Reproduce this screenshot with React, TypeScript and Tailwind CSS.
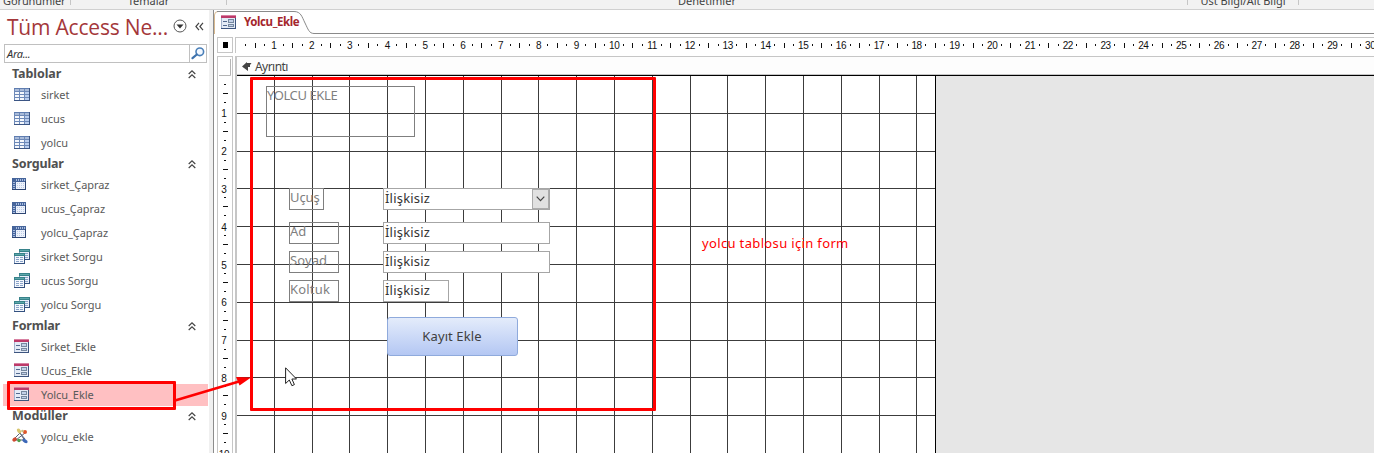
import React from "react";

const ui = "font-['Noto_Sans','Open_Sans',sans-serif]";
const UNIT = 37.795;

function TableIcon() {
  return (
    <svg width="16" height="13" shapeRendering="crispEdges">
      <rect width="16" height="13" fill="#6d89b8" />
      <rect x="1" y="1" width="14" height="2" fill="#a9bbd9" />
      {[4, 7, 10].map((y) =>
        [1, 6, 11].map((x) => (
          <rect key={`${x}-${y}`} x={x} y={y} width="4" height="2" fill={x === 11 ? "#b9cdee" : "#f4f7fc"} />
        ))
      )}
      <rect x="0" y="0" width="16" height="1" fill="#5f7db0" />
      <rect x="5" y="1" width="1" height="2" fill="#6d89b8" />
      <rect x="10" y="1" width="1" height="2" fill="#6d89b8" />
      <path d="M0 12h16v1H0zM15 0h1v13h-1z" fill="#3b5584" />
    </svg>
  );
}

function CrosstabIcon() {
  return (
    <svg width="14" height="12" shapeRendering="crispEdges">
      <rect width="14" height="12" fill="#46659b" />
      {[4, 6, 8, 10, 12].map((x) => (
        <rect key={x} x={x} y="1" width="1" height="2" fill="#a9bcdf" />
      ))}
      {[4, 6, 8, 10].map((y) => (
        <rect key={y} x="1" y={y} width="2" height="1" fill="#a9bcdf" />
      ))}
      <rect x="4" y="4" width="9" height="7" fill="#edf2fb" />
      {[5, 7, 9].map((y) =>
        [5, 7, 9, 11].map((x) => <rect key={`${x}-${y}`} x={x} y={y} width="1" height="1" fill="#bccbe6" />)
      )}
      <path d="M0 11h14v1H0zM13 3h1v9h-1z" fill="#2e4673" />
    </svg>
  );
}

function QueryIcon() {
  return (
    <svg width="16" height="15" shapeRendering="crispEdges">
      <rect x="5" y="0" width="11" height="11" fill="#7f97bb" />
      <rect x="5" y="0" width="11" height="3" fill="#37828a" />
      <rect x="6" y="1" width="9" height="1" fill="#5ea7ab" />
      <rect x="6" y="3" width="9" height="7" fill="#e8effa" />
      <path d="M11 4h3v1h-3zM11 6h3v1h-3zM11 8h3v1h-3z" fill="#8ba3c9" />
      <path d="M11 10h5v1h-5zM15 3h1v8h-1z" fill="#33507f" />
      <rect x="0" y="4" width="11" height="11" fill="#7f97bb" />
      <rect x="0" y="4" width="11" height="3" fill="#37828a" />
      <rect x="1" y="5" width="9" height="1" fill="#5ea7ab" />
      <rect x="1" y="7" width="9" height="7" fill="#f4f8fd" />
      <path d="M2 8h3v1H2zM6 8h3v1H6zM2 10h3v1H2zM6 10h3v1H6zM2 12h3v1H2zM6 12h3v1H6z" fill="#8ba3c9" />
      <path d="M0 14h11v1H0zM10 7h1v8h-1z" fill="#33507f" />
    </svg>
  );
}

function FormIcon() {
  return (
    <svg width="15" height="14" shapeRendering="crispEdges">
      <rect width="15" height="14" fill="#a3b2cd" />
      <rect width="15" height="3" fill="#bd3a69" />
      <rect width="15" height="1" fill="#d881a2" />
      <rect x="1" y="3" width="13" height="10" fill="#e4ebf6" />
      <path d="M2 6h4v1H2zM2 10h4v1H2z" fill="#52698f" />
      <path d="M7 4h6v4H7zM7 9h6v3H7z" fill="#76889f" />
      <path d="M8 5h4v2H8zM8 10h4v1H8z" fill="#c3d1e8" />
      <path d="M0 13h15v1H0zM14 3h1v11h-1z" fill="#3d557f" />
    </svg>
  );
}

function ModuleIcon() {
  return (
    <svg width="17" height="16">
      <path d="M3 10 8 5l5 8M7 4l6 7M4 12l9-7M3 12h9" fill="none" stroke="#5c6478" strokeWidth="1" />
      <ellipse cx="7" cy="3" rx="1.700" ry="2.6" fill="#d8c670" transform="rotate(-35 7 3)" />
      <circle cx="13" cy="4" r="2" fill="#e0572b" />
      <circle cx="10.500" cy="3" r="1.300" fill="#c9bd84" />
      <ellipse cx="2.6" cy="11.500" rx="2.400" ry="1.800" fill="#cf4a31" transform="rotate(-40 2.6 11.5)" />
      <circle cx="7" cy="12.500" r="1.700" fill="#4fa04a" />
      <ellipse cx="13" cy="13" rx="2.900" ry="1.700" fill="#3c68b8" transform="rotate(30 13 13)" />
    </svg>
  );
}

function Collapse() {
  return (
    <svg width="8" height="9" fill="none" stroke="#444" strokeWidth="1.2">
      <path d="M.7 4 4 .9 7.300 4M.7 8 4 4.900 7.300 8" />
    </svg>
  );
}

const groups = [
  { title: "Tablolar", w: "tracking-[-0.1px]", items: [["sirket", "table"], ["ucus", "table"], ["yolcu", "table"]] },
  {
    title: "Sorgular",
    w: "tracking-[-0.15px]",
    items: [
      ["sirket_Çapraz", "cross"], ["ucus_Çapraz", "cross"], ["yolcu_Çapraz", "cross"],
      ["sirket Sorgu", "query"], ["ucus Sorgu", "query"], ["yolcu Sorgu", "query"],
    ],
  },
  { title: "Formlar", w: "tracking-[-0.2px]", items: [["Sirket_Ekle", "form"], ["Ucus_Ekle", "form"], ["Yolcu_Ekle", "form"]] },
  { title: "Modüller", w: "tracking-[-0.05px]", items: [["yolcu_ekle", "module"]] },
];

function ItemIcon({ kind }: { kind: string }) {
  if (kind === "table") return <TableIcon />;
  if (kind === "cross") return <CrosstabIcon />;
  if (kind === "query") return <QueryIcon />;
  if (kind === "form") return <FormIcon />;
  return <ModuleIcon />;
}

function Ribbon() {
  return (
    <header className="flex h-[10px] shrink-0 overflow-hidden border-b border-[#d0d0d0] bg-[#f2f2f2] text-[11px] leading-[16px] text-[#444]">
      <div className="flex h-[5px] w-[71px] border-r border-[#c6c6c6] pl-[3px]"><span className="-mt-[7px] tracking-[-0.1px]">Görünümler</span></div>
      <div className="flex h-[5px] w-[156px] justify-center border-r border-[#c6c6c6]"><span className="-mt-[7px]">Temalar</span></div>
      <div className="flex h-[5px] w-[961px] justify-center border-r border-[#c6c6c6]"><span className="-mt-[7px]">Denetimler</span></div>
      <div className="flex h-[5px] w-[111px] justify-center whitespace-nowrap border-r border-[#c6c6c6]"><span className="-mt-[7px] tracking-[-0.050px]">Üst Bilgi/Alt Bilgi</span></div>
    </header>
  );
}

function Sidebar() {
  return (
    <nav className="relative flex w-[214px] shrink-0 flex-col border-r border-[#8c8c8c] bg-white">
      <div className="flex grow flex-col border-r-4 border-[#f0f0f0]">
        <div className="flex h-[34px] items-center pl-[7px] text-[#a4373a]">
          <h1 className="w-[166px] whitespace-nowrap font-['Open_Sans','Noto_Sans',sans-serif] text-[21px] leading-[34px] tracking-[-0.200px]">Tüm Access Ne...</h1>
          <svg width="14" height="14" className="-mt-[3px]">
            <circle cx="7" cy="7" r="6" fill="none" stroke="#555" />
            <path d="M3.500 5.500h7L7 9.500z" fill="#333" />
          </svg>
          <svg width="9" height="9" className="-mt-px ml-[8px]" fill="none" stroke="#444" strokeWidth="1.2">
            <path d="M4 .8.900 4.500 4 8.200M8 .8 4.900 4.500 8 8.200" />
          </svg>
        </div>
        <div className="ml-[4px] flex h-[19px] w-[203px] shrink-0 items-center border border-[#c0c0c0] pl-[2px]">
          <span className="grow text-[11px] italic leading-none tracking-[-0.3px] text-[#333]">Ara...</span>
          <div className="flex h-full w-[17px] items-center justify-center border-l border-[#c0c0c0]">
            <svg width="14" height="13" fill="none">
              <circle cx="8.800" cy="4.800" r="3.800" stroke="#4a7fb8" strokeWidth="1.600" fill="#f3f8ff" />
              <path d="m5.800 7.500-4.300 3.700" stroke="#3f73ad" strokeWidth="2.200" strokeLinecap="round" />
            </svg>
          </div>
        </div>
        <div className="mt-[2px] flex flex-col">
          {groups.map((g) => (
            <section key={g.title}>
              <h2 className={`flex h-[18px] items-center justify-between pl-[12px] pr-[13px] text-[12.500px] font-bold text-[#505050] ${g.w}`}>
                {g.title}
                <Collapse />
              </h2>
              {g.items.map(([name, kind]) => (
                <div key={name} className="flex h-6 items-center">
                  <div
                    className={`ml-[3px] flex h-[22px] w-[205px] shrink-0 items-center text-[11px] tracking-[-0.05px] text-[#5a5a5a] ${
                      name === "Yolcu_Ekle" ? "bg-[#ffc0c2]" : ""
                    }`}
                  >
                    <span className={`-mt-[2px] w-[38px] shrink-0 ${kind === "cross" || kind === "module" ? "pl-[9px]" : "pl-[11px]"}`}>
                      <ItemIcon kind={kind} />
                    </span>
                    <span>{name}</span>
                  </div>
                </div>
              ))}
            </section>
          ))}
        </div>
      </div>
    </nav>
  );
}

function Tab() {
  return (
    <div className="relative h-[24px] shrink-0">
      <svg width="1160" height="24" className="absolute inset-0" fill="none">
        <path d="M.5 24V5Q.500 1.500 4 1.500" stroke="#d8b98f" />
        <path d="M3 1.500H80C87 1.500 88 7 91 13S95 23.500 100 23.500H1160" stroke="#8a8a8a" />
      </svg>
      <div className="relative flex h-full items-center pl-[7px]">
        <FormIcon />
        <span className="ml-[8px] text-[11.500px] font-bold tracking-[-0.400px] text-[#a4262c]">Yolcu_Ekle</span>
      </div>
    </div>
  );
}

const rulerFont = "font-['Liberation_Sans',sans-serif]";

function HorizontalRuler() {
  return (
    <svg width="1139" height="16" className={`${rulerFont} shrink-0 border-l border-t border-[#c6c6c6] text-[10px]`}>
      {Array.from({ length: 31 }, (_, i) => {
        const x = i * UNIT;
        return (
          <g key={i} fill="#111">
            {i > 0 && <text x={x + 0.300} y="11" textAnchor="middle" className={i > 9 ? "tracking-[-0.400px]" : ""}>{i}</text>}
            <rect x={Math.round(x + 9)} y="6" width="1" height="2" />
            <rect x={Math.round(x + 18.500)} y="5" width="1" height="5" />
            <rect x={Math.round(x + 28)} y="6" width="1" height="2" />
          </g>
        );
      })}
    </svg>
  );
}

function VerticalRuler() {
  return (
    <svg width="16" height="397" className={`${rulerFont} shrink-0 border-x border-t border-[#c6c6c6] text-[10px]`}>
      <path d="M1 18.500H12.500V2" fill="none" stroke="#b5b5b5" />
      {Array.from({ length: 11 }, (_, i) => {
        const y = i * UNIT + 18.500;
        return (
          <g key={i} fill="#111">
            {i > 0 && <text x="6" y={y + 4.200} textAnchor="middle" className={i > 9 ? "tracking-[-0.400px]" : ""}>{i}</text>}
            <rect x="6" y={Math.round(y + 8.500)} width="2" height="1" />
            <rect x="5" y={Math.round(y + 17.500)} width="5" height="1" />
            <rect x="6" y={Math.round(y + 26.500)} width="2" height="1" />
          </g>
        );
      })}
    </svg>
  );
}

const label = "absolute border border-[#7f7f7f] text-[13px] leading-[17px] text-[#7f7f7f] whitespace-nowrap";
const field = "absolute flex items-center border border-[#a6a6a6] bg-white pl-px text-[13px] leading-none text-[#333] tracking-[0.200px]";

function Canvas() {
  return (
    <div className="relative grow overflow-hidden bg-[#e6e6e6]">
      <svg width="699" height="377" className="absolute left-0 top-0 bg-white" shapeRendering="crispEdges">
        {Array.from({ length: 18 }, (_, i) => (
          <rect key={i} x={Math.floor((i + 1) * UNIT - 0.5)} y="0" width="1" height="377" fill="#3c3c3c" />
        ))}
        {Array.from({ length: 9 }, (_, i) => (
          <rect key={i} x="0" y={Math.floor((i + 1) * UNIT - 0.5)} width="699" height="1" fill="#3c3c3c" />
        ))}
        <rect x="698" width="1" height="377" fill="#000" />
      </svg>
      <div className={`${label} left-[29px] top-[10px] h-[51px] w-[149px] tracking-[-0.400px]`}>YOLCU EKLE</div>
      <div className={`${label} left-[52px] top-[112px] h-[22px] w-[35px] tracking-[-0.100px]`}>Uçuş</div>
      <div className={`${label} left-[52px] top-[146px] h-[22px] w-[50px]`}>Ad</div>
      <div className={`${label} left-[52px] top-[175px] h-[22px] w-[50px] tracking-[0.100px]`}>Soyad</div>
      <div className={`${label} left-[52px] top-[204px] h-[22px] w-[50px] tracking-[0.200px]`}>Koltuk</div>
      <div className={`${field} left-[146px] top-[112px] h-[22px] w-[167px] justify-between`}>
        <span className="-mt-[2px]">İlişkisiz</span>
        <span className="flex h-[20px] w-[17px] items-center justify-center border border-[#ababab] bg-[#e1e1e1]">
          <svg width="9" height="6" fill="none" stroke="#444" strokeWidth="1.2"><path d="m.7.700 3.800 4 3.800-4" /></svg>
        </span>
      </div>
      <div className={`${field} left-[146px] top-[146px] h-[22px] w-[167px]`}><span className="-mt-[2px]">İlişkisiz</span></div>
      <div className={`${field} left-[146px] top-[175px] h-[22px] w-[167px]`}><span className="-mt-[2px]">İlişkisiz</span></div>
      <div className={`${field} left-[146px] top-[204px] h-[22px] w-[66px]`}><span className="-mt-[2px]">İlişkisiz</span></div>
      <button className="absolute left-[150px] top-[241px] h-[39px] w-[131px] rounded-[3px] border border-[#8faadc] bg-gradient-to-b from-[#e4ecfb] to-[#b4c7f3] pr-px text-[13px] tracking-[0.100px] text-[#404040]">
        Kayıt Ekle
      </button>
      <div className="absolute left-[465px] top-[158px] whitespace-nowrap text-[13px] leading-[18px] tracking-[0.350px] text-[#ff0000]">yolcu tablosu için form</div>
      <div className="absolute left-[13px] top-px h-[334px] w-[406px] rounded-[1px] border-[3px] border-[#ff0000]" />
      <svg width="12" height="20" className="absolute left-[48px] top-[291px]">
        <path d="M.6.800v15.700l3.700-3.500 2.600 5.700 2.500-1.100L6.900 12h4.600z" fill="#fff" stroke="#222" />
      </svg>
    </div>
  );
}

export default function App() {
  return (
    <div className={`${ui} relative flex h-[453px] w-[1374px] flex-col overflow-hidden bg-white`}>
      <Ribbon />
      <div className="flex min-h-0 grow">
        <Sidebar />
        <main className="flex min-w-0 grow flex-col">
          <Tab />
          <div className="flex min-h-0 grow pl-[3px] pt-[3px]">
            <div className="flex w-[18px] shrink-0 flex-col">
              <div className="mb-[3px] flex h-[16px] w-[16px] shrink-0 items-center justify-center border border-[#c6c6c6]">
                <span className="h-[6px] w-[5px] bg-black" />
              </div>
              <VerticalRuler />
            </div>
            <div className="flex min-w-0 grow flex-col">
              <HorizontalRuler />
              <div className="mt-[3px] flex grow flex-col border-l-2 border-t border-[#c6c6c6]">
                <div className="flex h-[19px] shrink-0 items-center border-b border-black bg-[#fdfdfd] pl-[5px] text-[12px] text-[#444] shadow-[inset_0_-1px_0_#c6c6c6]">
                  <svg width="10" height="9" className="mr-[3px]"><path d="M0 4.500 5 0v1h4.500L8 3v2H6v4z" fill="#444" /></svg>
                  <span className="mt-[2px] leading-none tracking-[-0.550px]">Ayrıntı</span>
                </div>
                <Canvas />
              </div>
            </div>
          </div>
        </main>
      </div>
      <div className="absolute left-[7px] top-[381px] h-[29px] w-[169px] rounded-[1px] border-[3px] border-[#ff0000]" />
      <svg width="80" height="30" className="absolute left-[174px] top-[374px]">
        <path d="M1 26.500 65 7.500" stroke="#f00" strokeWidth="2.500" />
        <path d="M77 3.500 62 3l3.500 8.500z" fill="#f00" />
      </svg>
    </div>
  );
}
